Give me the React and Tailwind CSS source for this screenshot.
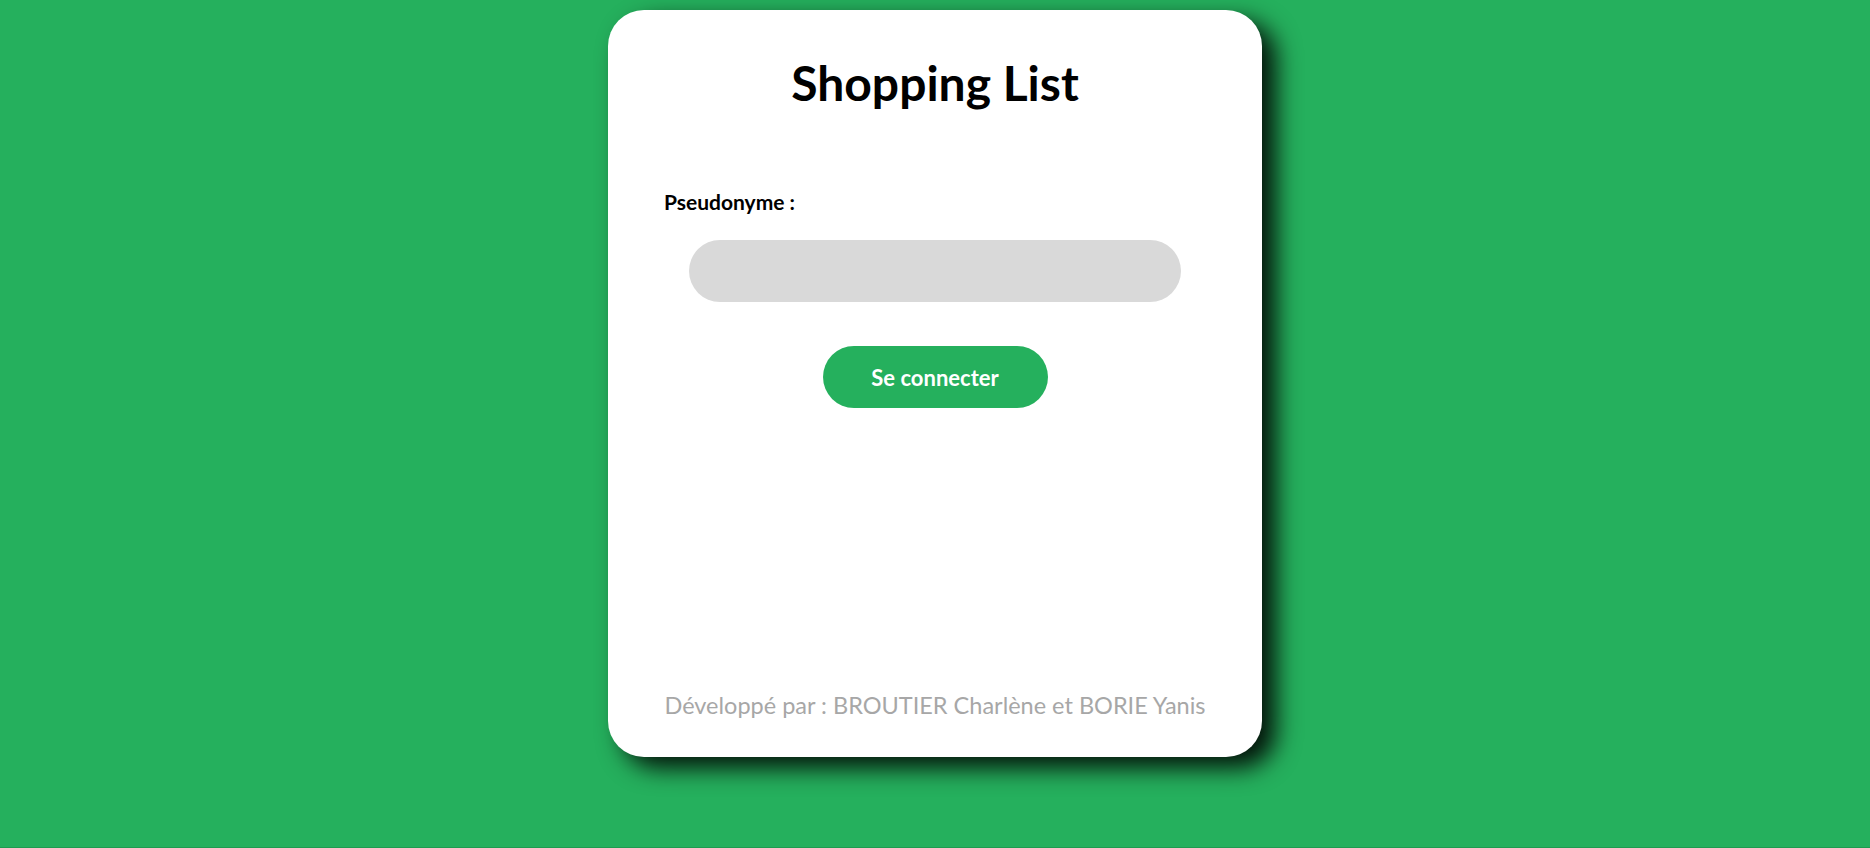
export default function App() {
  return (
    <div className="min-h-[848px] bg-[#25b05d] border-b border-[#1e9a4f] flex justify-center pt-[10px] font-['Lato',sans-serif]">
      <div className="w-[654px] h-[747px] bg-white rounded-[36px] shadow-[14px_11px_24px_rgba(0,0,0,0.9)] flex flex-col px-[56px]">
        {/* Title */}
        <h1 className="text-center text-[48px] font-bold text-black mt-[49px] leading-none">
          Shopping List
        </h1>

        {/* Form */}
        <label className="mt-[84px] text-[21px] font-bold text-black leading-none">
          Pseudonyme :
        </label>
        <input
          type="text"
          className="mt-[28px] mx-auto w-[492px] h-[62px] rounded-full bg-[#d9d9d9] outline-none px-6 text-lg"
        />
        <button className="mt-[44px] mx-auto w-[225px] h-[62px] rounded-full bg-[#25b05d] text-white text-[22px] font-bold">
          Se connecter
        </button>

        {/* Footer */}
        <p className="mt-auto mb-[40px] text-center text-[23.5px] text-[#a7a7a7] leading-none">
          Développé par : BROUTIER Charlène et BORIE Yanis
        </p>
      </div>
    </div>
  )
}
